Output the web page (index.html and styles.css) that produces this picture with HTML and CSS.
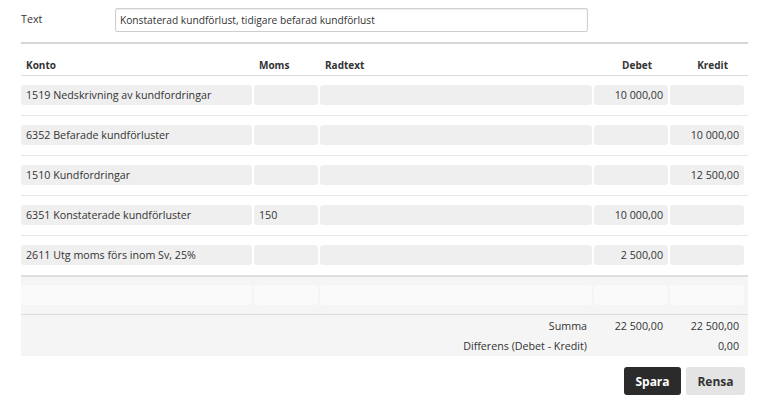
FILE: index.html
```html
<!DOCTYPE html>
<html lang="sv">
<head>
<meta charset="utf-8">
<title>Verifikation</title>
<link rel="stylesheet" href="styles.css">
</head>
<body>
<div class="page">
  <div class="text-row">
    <label class="text-label" for="vtext">Text</label>
    <input id="vtext" class="text-input" type="text" value="Konstaterad kundförlust, tidigare befarad kundförlust">
  </div>

  <div class="ledger">
    <div class="grid head">
      <div class="h">Konto</div>
      <div class="h">Moms</div>
      <div class="h">Radtext</div>
      <div class="h num">Debet</div>
      <div class="h num">Kredit</div>
    </div>

    <div class="grid row">
      <div class="c">1519 Nedskrivning av kundfordringar</div>
      <div class="c"></div>
      <div class="c"></div>
      <div class="c num">10 000,00</div>
      <div class="c num"></div>
    </div>
    <div class="grid row">
      <div class="c">6352 Befarade kundförluster</div>
      <div class="c"></div>
      <div class="c"></div>
      <div class="c num"></div>
      <div class="c num">10 000,00</div>
    </div>
    <div class="grid row">
      <div class="c">1510 Kundfordringar</div>
      <div class="c"></div>
      <div class="c"></div>
      <div class="c num"></div>
      <div class="c num">12 500,00</div>
    </div>
    <div class="grid row">
      <div class="c">6351 Konstaterade kundförluster</div>
      <div class="c">150</div>
      <div class="c"></div>
      <div class="c num">10 000,00</div>
      <div class="c num"></div>
    </div>
    <div class="grid row last">
      <div class="c">2611 Utg moms förs inom Sv, 25%</div>
      <div class="c"></div>
      <div class="c"></div>
      <div class="c num">2 500,00</div>
      <div class="c num"></div>
    </div>

    <div class="foot">
      <div class="grid row new">
        <div class="c"></div>
        <div class="c"></div>
        <div class="c"></div>
        <div class="c num"></div>
        <div class="c num"></div>
      </div>
      <div class="sums">
        <div class="grid sum">
          <div class="s-label">Summa</div>
          <div class="s num">22 500,00</div>
          <div class="s num">22 500,00</div>
        </div>
        <div class="grid sum">
          <div class="s-label">Differens (Debet - Kredit)</div>
          <div class="s num"></div>
          <div class="s num">0,00</div>
        </div>
      </div>
    </div>
  </div>

  <div class="actions">
    <button class="btn primary" type="button">Spara</button>
    <button class="btn secondary" type="button">Rensa</button>
  </div>
</div>
</body>
</html>
```

FILE: styles.css
```css
* { box-sizing: border-box; }

html, body {
  margin: 0;
  padding: 0;
  background: #fff;
}

body {
  font-family: "Open Sans", "Liberation Sans", Arial, sans-serif;
  font-size: 10.7px;
  color: #333;
}

.page {
  width: 727px;
  margin-left: 21px;
  padding-top: 8px;
}

.text-row {
  display: flex;
  align-items: center;
  height: 24px;
}

.text-label {
  width: 94px;
  font-size: 10.7px;
  color: #333;
  margin-top: -2px;
}

.text-input {
  width: 473px;
  height: 24px;
  border: 1px solid #cfcfcf;
  border-radius: 2px;
  box-shadow: inset 0 1px 2px rgba(0,0,0,0.08);
  padding: 0 4px;
  font-family: inherit;
  font-size: 10.2px;
  color: #333;
  background: #fff;
}

.ledger {
  margin-top: 10px;
  border-top: 2px solid #d6d6d6;
}

.grid {
  display: grid;
  grid-template-columns: 231px 64px 272px 74px 74px;
  column-gap: 2px;
  padding-right: 4px;
}

.head {
  height: 32px;
  padding-top: 14px;
  border-bottom: 1px solid #dcdcdc;
}

.h {
  font-weight: 700;
  font-size: 10px;
  line-height: 14px;
  padding-left: 5px;
  color: #333;
}

.h.num {
  text-align: right;
  padding-right: 16px;
}

.row {
  padding-top: 9px;
  padding-bottom: 10px;
  border-bottom: 1px solid #e6e6e6;
}

.row.last {
  border-bottom: none;
}

.c {
  height: 20px;
  line-height: 20px;
  background: #efefef;
  border-radius: 3px;
  padding: 0 5px;
  white-space: nowrap;
  overflow: hidden;
}

.c.num {
  text-align: right;
}

.foot {
  background: #f5f5f5;
  border-top: 2px solid #dedede;
}

.row.new {
  padding-top: 8px;
  padding-bottom: 9px;
  border-bottom: 1px solid #dcdcdc;
}

.row.new .c {
  background: #fafafa;
}

.sums {
  padding: 1px 0 0;
}

.sum {
  grid-template-columns: 569px 74px 74px;
  height: 20px;
  line-height: 20px;
}

.s-label {
  text-align: right;
  padding-right: 3px;
}

.s.num {
  text-align: right;
  padding-right: 3px;
}

.actions {
  display: flex;
  justify-content: flex-end;
  gap: 5px;
  margin-top: 11px;
  padding-right: 3px;
}

.btn {
  height: 28px;
  border: none;
  border-radius: 3px;
  font-family: inherit;
  font-size: 12px;
  font-weight: 700;
  padding: 0;
  cursor: pointer;
}

.btn.primary {
  width: 57px;
  background: #2b2b2b;
  color: #fff;
}

.btn.secondary {
  width: 59px;
  background: #e4e4e4;
  color: #333;
}
```
